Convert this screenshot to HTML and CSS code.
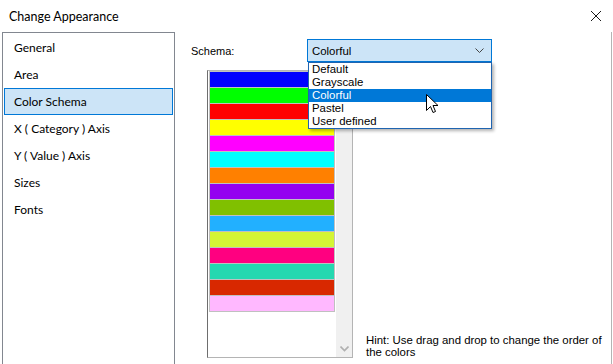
FILE: index.html
```html
<!DOCTYPE html>
<html lang="en">
<head>
    <meta charset="UTF-8">
    <meta name="viewport" content="width=device-width, initial-scale=1.0">
    <title>Change Appearance</title>
    <link rel="stylesheet" href="styles.css">
</head>
<body>
    <!-- Ventana del diálogo -->
    <div class="window">
        <div class="titlebar">
            <span class="title">Change Appearance</span>
            <svg class="close" width="12" height="12" viewBox="0 0 12 12">
                <path d="M1 1 L11 11 M11 1 L1 11" stroke="#1a1a1a" stroke-width="1" fill="none"/>
            </svg>
        </div>

        <div class="content">
            <!-- Lista de secciones -->
            <ul class="nav">
                <li class="nav-item">General</li>
                <li class="nav-item">Area</li>
                <li class="nav-item active">Color Schema</li>
                <li class="nav-item">X ( Category ) Axis</li>
                <li class="nav-item">Y ( Value ) Axis</li>
                <li class="nav-item">Sizes</li>
                <li class="nav-item">Fonts</li>
            </ul>

            <!-- Panel de la sección activa -->
            <div class="panel">
                <div class="schema-row">
                    <span class="schema-label">Schema:</span>
                    <div class="combo">
                        <span class="combo-value">Colorful</span>
                        <svg class="combo-arrow" width="9" height="5" viewBox="0 0 9 5">
                            <path d="M0.5 0.5 L4.5 4.5 L8.5 0.5" stroke="#444" stroke-width="1" fill="none"/>
                        </svg>
                        <ul class="dropdown">
                            <li>Default</li>
                            <li>Grayscale</li>
                            <li class="selected">Colorful</li>
                            <li>Pastel</li>
                            <li>User defined</li>
                        </ul>
                    </div>
                </div>

                <div class="panel-body">
                    <div class="colors">
                        <div class="bars">
                            <div class="bar" style="background: #0000ff"></div>
                            <div class="bar" style="background: #00ff00"></div>
                            <div class="bar" style="background: #ff0000"></div>
                            <div class="bar" style="background: #ffff00"></div>
                            <div class="bar" style="background: #ff00ff"></div>
                            <div class="bar" style="background: #00ffff"></div>
                            <div class="bar" style="background: #ff8000"></div>
                            <div class="bar" style="background: #9400f0"></div>
                            <div class="bar" style="background: #80c000"></div>
                            <div class="bar" style="background: #22b0ff"></div>
                            <div class="bar" style="background: #d4f535"></div>
                            <div class="bar" style="background: #ff0080"></div>
                            <div class="bar" style="background: #25d8b0"></div>
                            <div class="bar" style="background: #d82800"></div>
                            <div class="bar" style="background: #ffb8ff"></div>
                        </div>
                        <div class="scrollbar">
                            <svg width="9" height="6" viewBox="0 0 9 6">
                                <path d="M0.5 0.5 L4.5 4.5 L8.5 0.5" stroke="#b0b0b0" stroke-width="1.6" fill="none"/>
                            </svg>
                        </div>
                    </div>
                    <p class="hint">Hint: Use drag and drop to change the order of the colors</p>
                </div>
            </div>
        </div>

        <!-- Puntero del ratón -->
        <svg class="cursor" width="13" height="20" viewBox="0 0 13 20">
            <path d="M0.5 0.5 L0.5 16.5 L4.5 12.5 L7 18.5 L9.5 17.5 L7 11.5 L12 11.5 Z" fill="#fff" stroke="#000" stroke-width="1"/>
        </svg>
    </div>
</body>
</html>
```

FILE: styles.css
```css
/* Reset básico */
body {
    margin: 0;
    background: #fff;
}

ul {
    list-style: none;
    margin: 0;
    padding: 0;
}

/* Ventana */
.window {
    position: relative;
    width: 613px;
    height: 364px;
    overflow: hidden;
    background: #fff;
}

.titlebar {
    display: flex;
    align-items: center;
    justify-content: space-between;
    height: 32px;
    padding: 0 11px 0 9px;
    box-sizing: border-box;
    font-family: Lato, "Noto Sans", sans-serif;
    font-size: 12.5px;
    color: #000;
}

.close {
    margin-top: -1px;
}

.content {
    display: flex;
    width: 611px;
    height: 340px;
    border-right: 1px solid #b4b4b4;
}

/* Lista de secciones */
.nav {
    width: 173px;
    height: 340px;
    margin-left: 2px;
    padding: 1px;
    box-sizing: border-box;
    border: 1px solid #828790;
    font-family: Lato, "Noto Sans", sans-serif;
    font-size: 12px;
    color: #000;
}

.nav-item {
    height: 27px;
    line-height: 26px;
    padding-left: 9px;
    box-sizing: border-box;
    border: 1px solid transparent;
}

.nav-item.active {
    background: #cce4f7;
    border-color: #0078d7;
}

/* Panel derecho */
.panel {
    flex: 1;
    padding-left: 16px;
    font-family: "Liberation Sans", Arial, sans-serif;
    font-size: 11px;
    color: #000;
}

.schema-row {
    display: flex;
    align-items: center;
    margin-top: 7px;
}

.schema-label {
    width: 116px;
}

.combo {
    position: relative;
    display: flex;
    align-items: center;
    justify-content: space-between;
    width: 185px;
    height: 23px;
    padding: 0 7px 0 4px;
    box-sizing: border-box;
    background: #cce4f7;
    border: 1px solid #0078d7;
}

.combo-value {
    margin-top: 1px;
    font-size: 11.4px;
}

/* Lista desplegable abierta */
.dropdown {
    position: absolute;
    top: 22px;
    left: 0;
    width: 182px;
    padding: 0;
    background: #fff;
    border: 1px solid #1f64b0;
    box-shadow: 2px 2px 3px rgba(0, 0, 0, 0.3);
    z-index: 10;
}

.dropdown li {
    height: 13px;
    line-height: 13px;
    padding-left: 3px;
    font-size: 11.4px;
}

.dropdown li.selected {
    background: #0078d7;
    color: #fff;
}

.panel-body {
    display: flex;
    align-items: flex-end;
    margin-top: 8px;
}

/* Lista de colores */
.colors {
    display: flex;
    justify-content: space-between;
    width: 146px;
    height: 288px;
    margin-left: 16px;
    box-sizing: border-box;
    border: 1px solid #b4b4b4;
    border-left-color: #6e6e6e;
}

.bars {
    display: flex;
    flex-direction: column;
    gap: 1px;
    align-self: flex-start;
    width: 126px;
    margin-left: 1px;
    padding: 1px;
    box-sizing: border-box;
    background: #c0c0c0;
}

.bar {
    height: 15px;
}

.scrollbar {
    display: flex;
    align-items: flex-end;
    justify-content: center;
    width: 16px;
    padding-bottom: 5px;
    box-sizing: border-box;
    background: #f0f0f0;
}

.hint {
    width: 245px;
    margin: 0 0 0 13px;
    font-size: 11.4px;
    line-height: 12px;
}

/* Puntero */
.cursor {
    position: absolute;
    left: 426px;
    top: 94px;
    z-index: 20;
}
```
